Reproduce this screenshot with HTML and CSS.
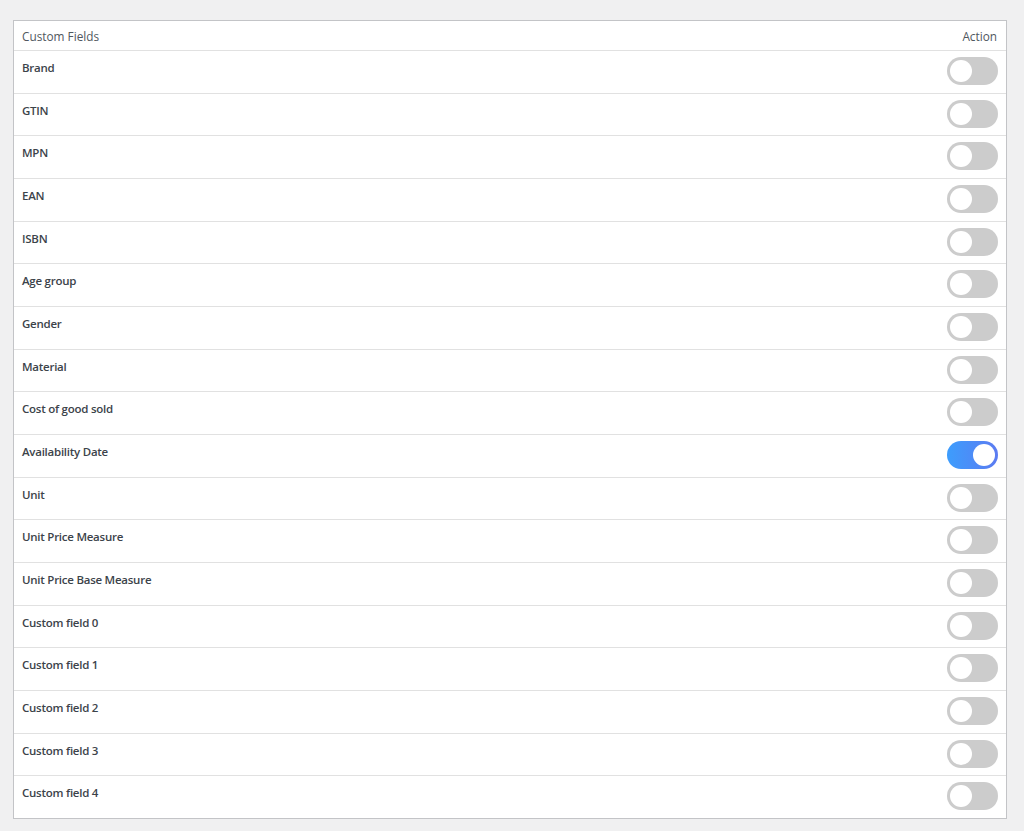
FILE: index.html
```html
<!DOCTYPE html>
<html>
<head>
<meta charset="utf-8">
<link rel="stylesheet" href="styles.css">
</head>
<body>
<div class="wrap">
  <div class="table">
    <div class="head">
      <span class="h-label">Custom Fields</span>
      <span class="h-action">Action</span>
    </div>
    <div class="row"><span class="label">Brand</span><span class="toggle"></span></div>
    <div class="row"><span class="label">GTIN</span><span class="toggle"></span></div>
    <div class="row"><span class="label">MPN</span><span class="toggle"></span></div>
    <div class="row"><span class="label">EAN</span><span class="toggle"></span></div>
    <div class="row"><span class="label">ISBN</span><span class="toggle"></span></div>
    <div class="row"><span class="label">Age group</span><span class="toggle"></span></div>
    <div class="row"><span class="label">Gender</span><span class="toggle"></span></div>
    <div class="row"><span class="label">Material</span><span class="toggle"></span></div>
    <div class="row"><span class="label">Cost of good sold</span><span class="toggle"></span></div>
    <div class="row"><span class="label">Availability Date</span><span class="toggle on"></span></div>
    <div class="row"><span class="label">Unit</span><span class="toggle"></span></div>
    <div class="row"><span class="label">Unit Price Measure</span><span class="toggle"></span></div>
    <div class="row"><span class="label">Unit Price Base Measure</span><span class="toggle"></span></div>
    <div class="row"><span class="label">Custom field 0</span><span class="toggle"></span></div>
    <div class="row"><span class="label">Custom field 1</span><span class="toggle"></span></div>
    <div class="row"><span class="label">Custom field 2</span><span class="toggle"></span></div>
    <div class="row"><span class="label">Custom field 3</span><span class="toggle"></span></div>
    <div class="row last"><span class="label">Custom field 4</span><span class="toggle"></span></div>
  </div>
</div>
</body>
</html>
```
FILE: styles.css
```css
html, body {
  margin: 0;
  padding: 0;
  background: #f0f0f1;
  font-family: "Open Sans", "Noto Sans", sans-serif;
}
.wrap {
  padding: 20px 17px 0 13px;
}
.table {
  background: #fff;
  border: 1px solid #c3c4c7;
  box-sizing: border-box;
  width: 994px;
}
.head {
  height: 30px;
  box-sizing: border-box;
  border-bottom: 1px solid #e1e1e1;
  display: flex;
  justify-content: space-between;
  align-items: center;
  padding: 0 9px 0 8px;
  font-size: 11.8px;
  color: #50575e;
}
.row {
  height: 42.67px;
  box-sizing: border-box;
  border-bottom: 1px solid #e1e1e1;
  display: flex;
  justify-content: space-between;
  align-items: flex-start;
  padding: 0 8px 0 8px;
}
.row.last {
  border-bottom: none;
  height: 42px;
}
.label {
  font-size: 11.5px;
  font-weight: 600;
  color: #3c434a;
  margin-top: 9px;
  letter-spacing: -0.25px;
}
.toggle {
  position: relative;
  width: 51px;
  height: 28px;
  border-radius: 14px;
  background: #cccccc;
  margin-top: 6px;
  flex: none;
}
.toggle::after {
  content: "";
  position: absolute;
  left: 3px;
  top: 3px;
  width: 22px;
  height: 22px;
  border-radius: 50%;
  background: #fff;
}
.toggle.on {
  background: linear-gradient(90deg, #3d9dfd, #5c7bf1);
}
.toggle.on::after {
  left: 26px;
}
```
